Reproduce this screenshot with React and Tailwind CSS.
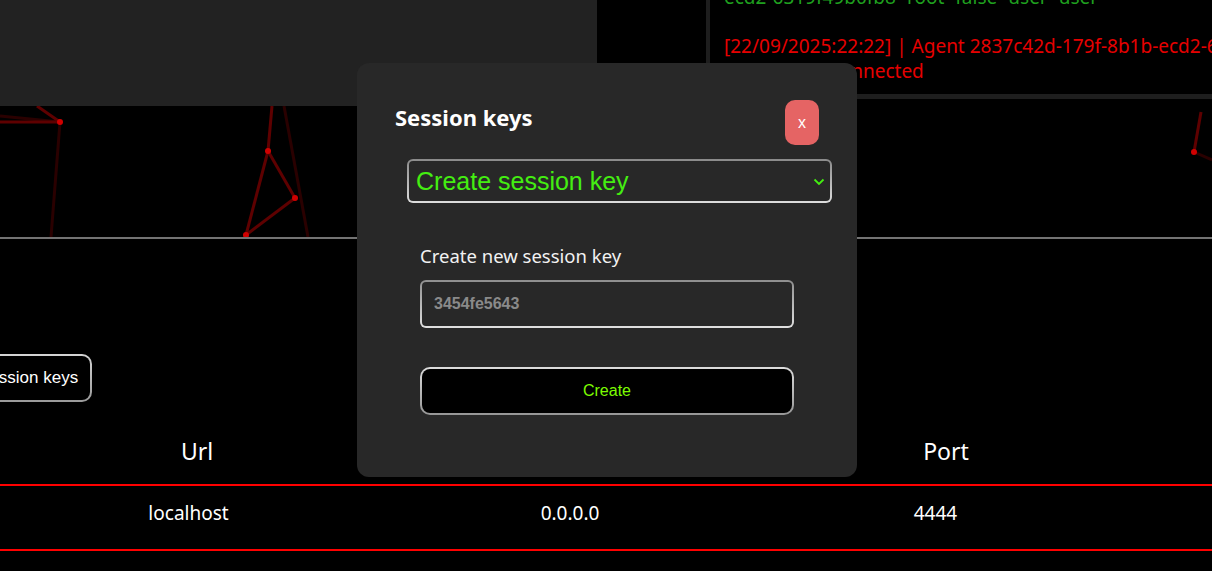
import React from "react";

const sans = "font-['Noto_Sans',sans-serif]";
const arial = "font-['Liberation_Sans',Arial,sans-serif]";

const Network = () => (
  <svg className="absolute inset-0 h-full w-full" viewBox="0 0 1212 237" preserveAspectRatio="none">
    {/* faint links */}
    <g stroke="#2a0000" strokeWidth="3" fill="none">
      <line x1="0" y1="116" x2="60" y2="122" />
      <line x1="60" y1="122" x2="51" y2="237" />
      <line x1="284" y1="106" x2="308" y2="237" />
      <line x1="1194" y1="152" x2="1212" y2="160" />
    </g>
    {/* strong links */}
    <g stroke="#5e0000" strokeWidth="3" fill="none">
      <line x1="0" y1="122" x2="60" y2="122" />
      <line x1="37" y1="106" x2="60" y2="122" />
      <line x1="272" y1="106" x2="268" y2="151" />
      <line x1="268" y1="151" x2="295" y2="198" />
      <line x1="295" y1="198" x2="246" y2="235" />
      <line x1="268" y1="151" x2="246" y2="235" />
      <line x1="1201" y1="112" x2="1194" y2="152" />
    </g>
    <g fill="#d00000">
      <circle cx="60" cy="122" r="3" />
      <circle cx="268" cy="151" r="3" />
      <circle cx="295" cy="198" r="3" />
      <circle cx="246" cy="235" r="3" />
      <circle cx="1194" cy="152" r="3" />
    </g>
  </svg>
);

const LogPanel = () => (
  <div className={`relative ml-auto h-[99px] w-[506px] overflow-hidden border-l-4 border-b-[5px] border-[#1e1e1e] bg-black pl-[14px] ${sans} text-[19px] leading-[25px] whitespace-nowrap`}>
    <div className="-mt-[15px] mb-6 text-[#1f9f1f]">ecd2-6319f49b0fb8 -root -false -user -user</div>
    <div className="text-[#e60000]">[22/09/2025:22:22] | Agent 2837c42d-179f-8b1b-ecd2-6319f49b0fb8</div>
    <div className="text-[#e60000]">19f49b0fb8 connected</div>
  </div>
);

const SessionModal = () => (
  <div className={`absolute left-[357px] top-[63px] w-[500px] h-[414px] rounded-xl bg-[#282828] px-[38px] pt-[37px] ${sans}`}>
    <div className="flex items-start justify-between">
      <h2 className="mt-[6px] text-[22px] font-bold text-white leading-[22px]">Session keys</h2>
      <button className={`h-[45px] w-[34px] rounded-[10px] bg-[#e56464] text-[16px] text-white ${arial}`}>x</button>
    </div>

    <div className="mt-[14px] ml-3 -mr-[13px] flex h-[44px] items-center justify-between rounded-[6px] border-2 border-transparent pl-[7px] pr-[5px] pt-[2px] [background:linear-gradient(#282828,#282828)_padding-box,linear-gradient(to_bottom,#8a8a8a,#dedede)_border-box]">
      <span className={`${arial} text-[25px] text-[#44ee11]`}>Create session key</span>
      <svg width="12" height="8" viewBox="0 0 12 8" fill="none" stroke="#44ee11" strokeWidth="1.8">
        <polyline points="1.5,1.5 6,6 10.5,1.5" />
      </svg>
    </div>

    <div className="ml-[25px] w-[374px]">
      <label className="mt-[40px] block text-[18.5px] leading-[26px] text-[#f2f2f2]">Create new session key</label>
      <input
        placeholder="3454fe5643"
        className={`mt-[11px] block h-[48px] w-full rounded-[6px] border-2 border-transparent px-[12px] text-[16px] text-white outline-none ${arial} placeholder:font-bold placeholder:text-[#8a8a8a] [background:linear-gradient(#282828,#282828)_padding-box,linear-gradient(to_bottom,#8e8e8e,#e0e0e0)_border-box]`}
      />
      <button className={`mt-[39px] block h-[48px] w-full rounded-[10px] border-2 border-transparent text-[16px] text-[#7cfc00] ${arial} [background:linear-gradient(#000,#000)_padding-box,linear-gradient(to_bottom,#dcdcdc,#969696)_border-box]`}>
        Create
      </button>
    </div>
  </div>
);

export default function App() {
  return (
    <div className="relative h-[571px] w-[1212px] overflow-hidden bg-black">
      {/* top area: graph canvas with panels */}
      <div className="relative h-[239px] border-b-2 border-[#737373]">
        <Network />
        <div className="relative flex items-start">
          <div className="h-[106px] w-[597px] bg-[#222222]" />
          <LogPanel />
        </div>
      </div>

      {/* controls */}
      <div className="pt-[115px]">
        <button className={`-ml-[38px] h-[48px] rounded-[10px] border-2 border-transparent pl-[14px] pr-[12px] text-[17px] text-white ${arial} [background:linear-gradient(#000,#000)_padding-box,linear-gradient(to_bottom,#d4d4d4,#9a9a9a)_border-box]`}>
          Session keys
        </button>
      </div>

      {/* table */}
      <div className={`mt-[20px] ${sans} text-white`}>
        <div className="grid h-[64px] grid-cols-[377px_386px_345px_1fr] items-center border-b-2 border-[#ff0000] pb-[3px] text-[23px]">
          <div className="pl-[17px] text-center">Url</div>
          <div className="pl-[20px] text-center">Host</div>
          <div className="pl-[21px] text-center">Port</div>
          <div />
        </div>
        <div className="grid h-[65px] grid-cols-[377px_386px_345px_1fr] border-b-2 border-[#ff0000] pt-[13px] text-[19px] leading-[28px]">
          <div className="text-center">localhost</div>
          <div className="text-center">0.0.0.0</div>
          <div className="text-center">4444</div>
          <div />
        </div>
      </div>

      <SessionModal />
    </div>
  );
}
